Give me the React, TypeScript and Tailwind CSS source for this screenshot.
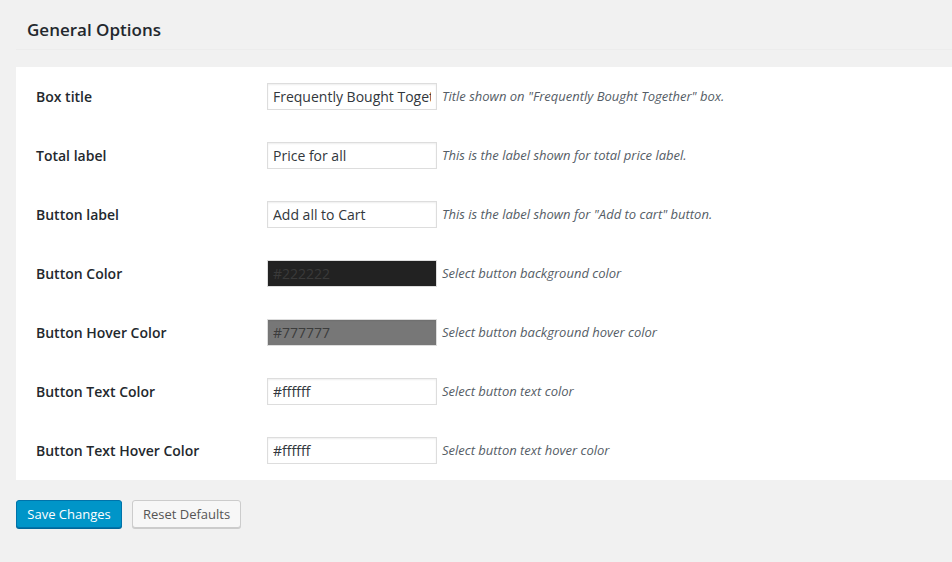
import React from "react";

const rows: { label: string; value: string; desc: string; bg?: string; fg?: string }[] = [
  { label: "Box title", value: "Frequently Bought Together", desc: 'Title shown on "Frequently Bought Together" box.' },
  { label: "Total label", value: "Price for all", desc: "This is the label shown for total price label." },
  { label: "Button label", value: "Add all to Cart", desc: 'This is the label shown for "Add to cart" button.' },
  { label: "Button Color", value: "#222222", desc: "Select button background color", bg: "#222222", fg: "#3a3a3a" },
  { label: "Button Hover Color", value: "#777777", desc: "Select button background hover color", bg: "#777777", fg: "#3c3c3c" },
  { label: "Button Text Color", value: "#ffffff", desc: "Select button text color" },
  { label: "Button Text Hover Color", value: "#ffffff", desc: "Select button text hover color" },
];

export default function App() {
  return (
    <div
      className="w-[952px] h-[562px] bg-[#f1f1f1] overflow-hidden text-[#23282d]"
      style={{ fontFamily: '"Open Sans", "Noto Sans", sans-serif' }}
    >
      <div className="pl-[16px]">
        <div className="h-[50px] border-b border-[#ececec] pl-[11px] pt-[17px]">
          <h2 className="text-[17px] leading-[26px] font-semibold text-[#23282d]">General Options</h2>
        </div>
        <div className="mt-[17px] bg-white pl-[20px]">
          {rows.map((r) => (
            <div key={r.label} className="h-[59px] flex items-center">
              <div className="w-[231px] text-[14px] font-semibold text-[#23282d]">{r.label}</div>
              <div
                className="w-[170px] h-[27px] border border-[#dddddd] flex items-center px-[5px] text-[14px] shadow-[inset_0_1px_2px_rgba(0,0,0,0.07)]"
                style={{ backgroundColor: r.bg ?? "#ffffff", color: r.fg ?? "#32373c" }}
              >
                <span className="block w-full overflow-hidden whitespace-nowrap">{r.value}</span>
              </div>
              <div className="ml-[5px] text-[13px] italic text-[#555d66] whitespace-nowrap">{r.desc}</div>
            </div>
          ))}
        </div>
        <div className="mt-[20px] flex gap-[10px]">
          <button className="h-[28px] w-[106px] whitespace-nowrap rounded-[3px] bg-[#0095c8] border border-[#0073aa] text-white text-[13px] leading-[26px] shadow-[0_1px_0_#006799]">
            Save Changes
          </button>
          <button className="h-[28px] w-[109px] whitespace-nowrap rounded-[3px] bg-[#f7f7f7] border border-[#cccccc] text-[#555555] text-[13px] leading-[26px] shadow-[0_1px_0_#cccccc]">
            Reset Defaults
          </button>
        </div>
      </div>
    </div>
  );
}
